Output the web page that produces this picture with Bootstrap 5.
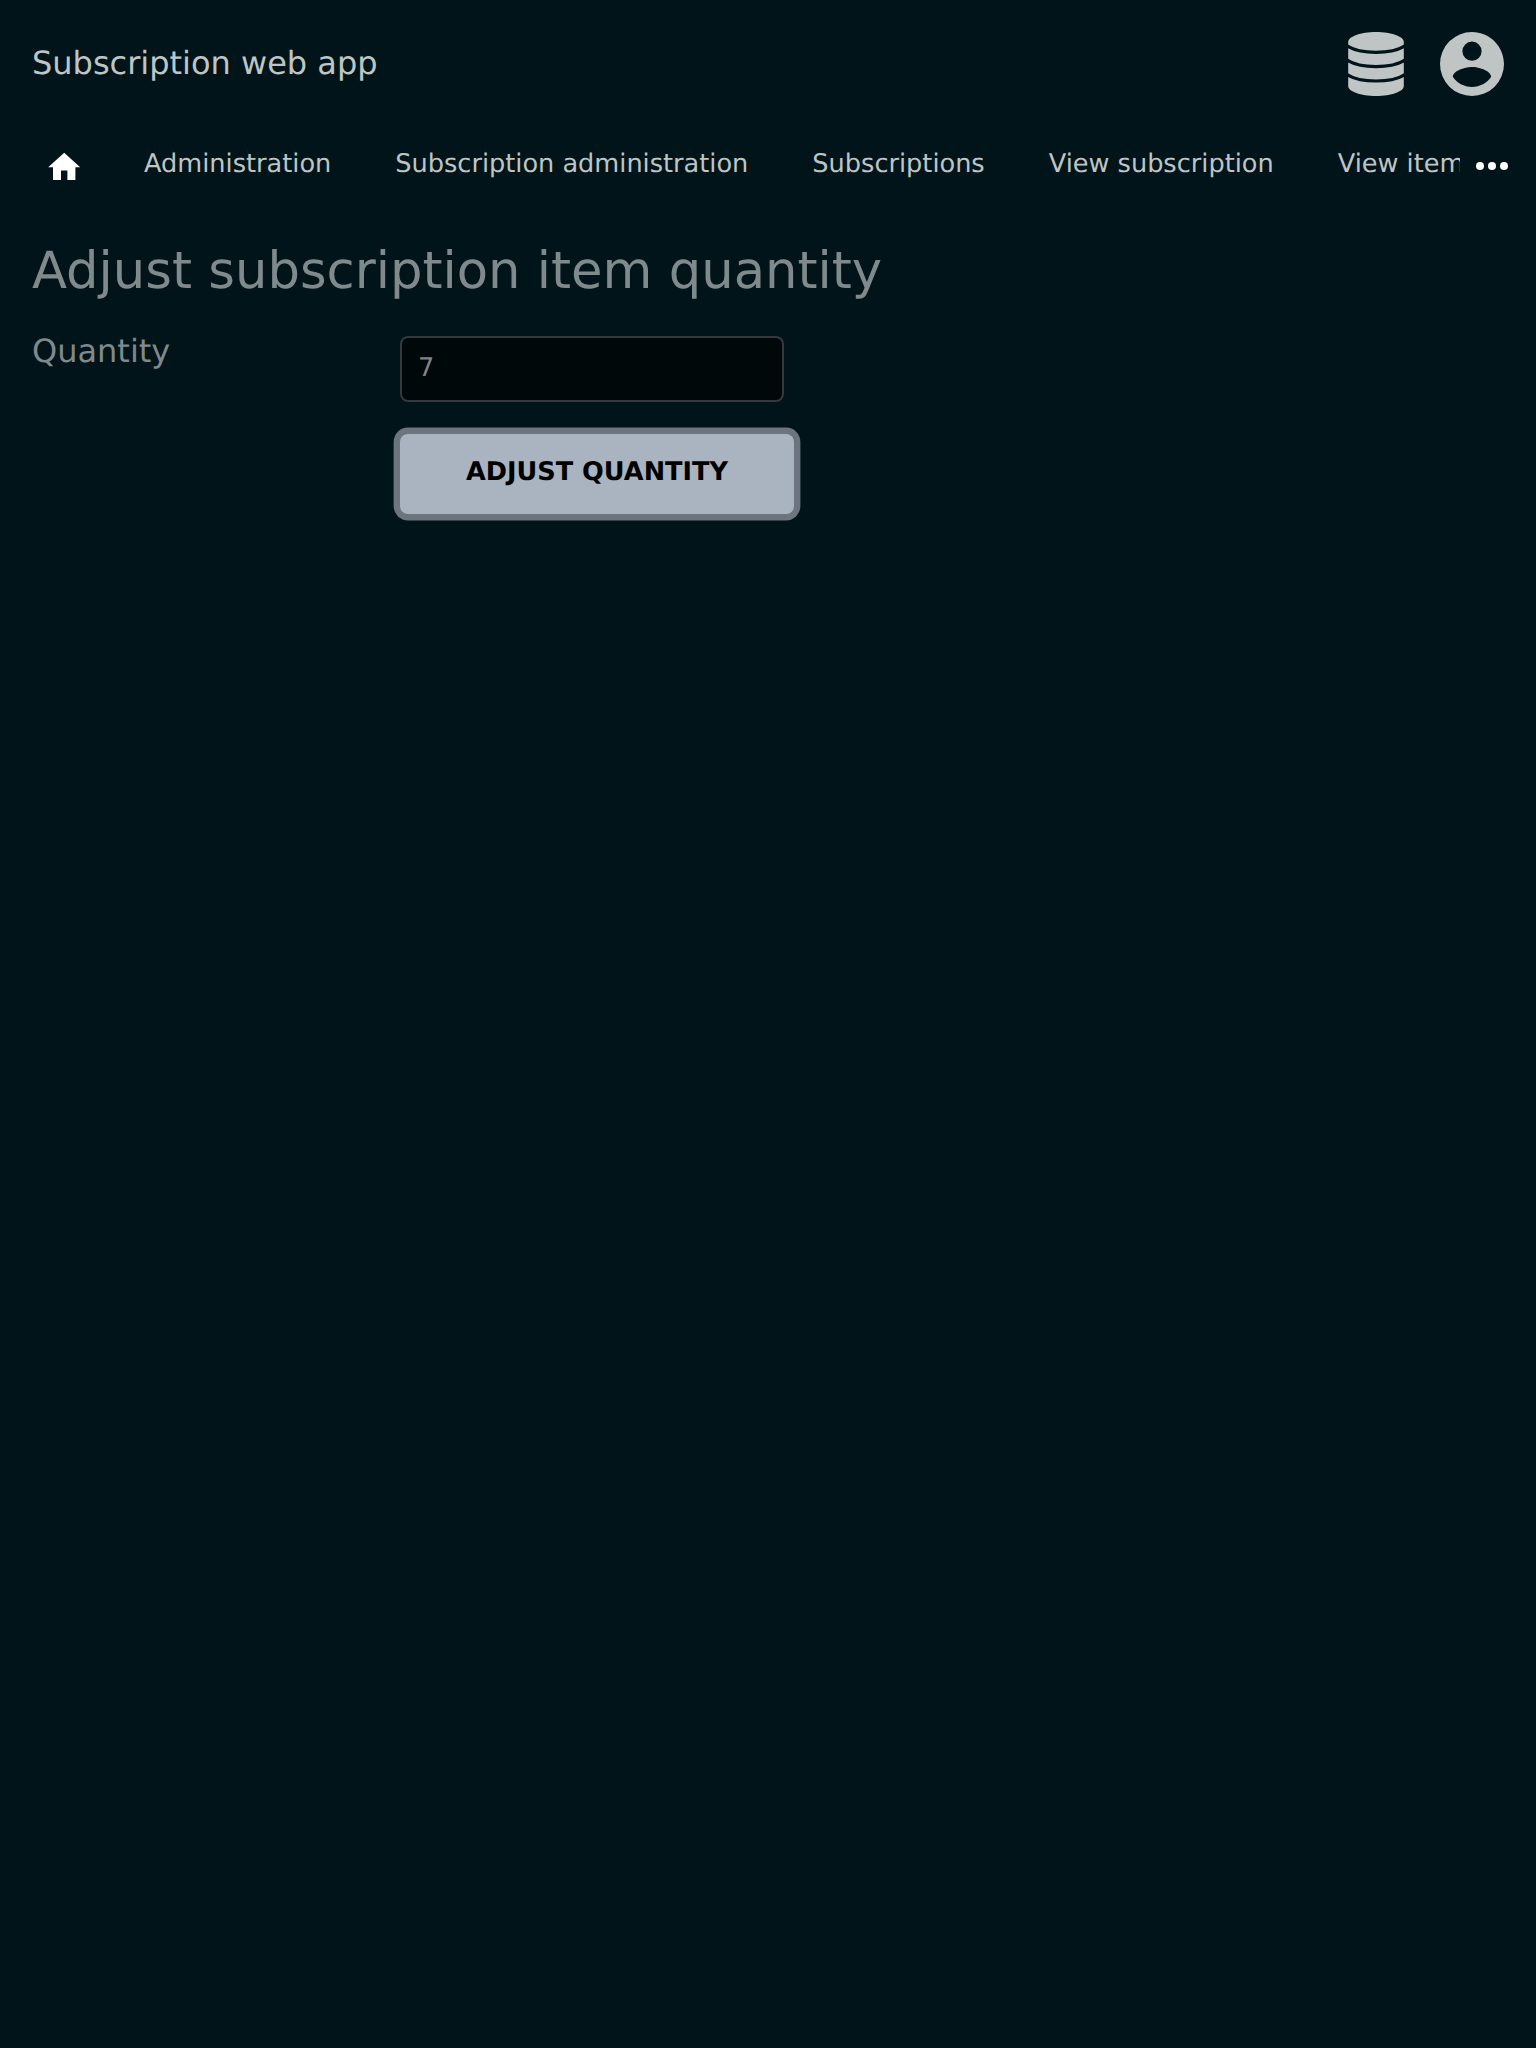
<!DOCTYPE html>
<html lang="en" data-bs-theme="dark">
<head>
<meta charset="utf-8">
<title>Subscription web app</title>
<link href="https://cdn.jsdelivr.net/npm/bootstrap@5.3.0/dist/css/bootstrap.min.css" rel="stylesheet">
<style>
body{background:#001419;font-family:"DejaVu Sans",sans-serif;font-size:32px;line-height:1.5;color:#80898c;min-height:100vh;text-rendering:geometricPrecision}
.topbar{height:128px;padding:0 32px;color:#bfc4c5}
.app-title{line-height:48px;margin-top:-2px}
.tools{gap:36px}
.tools svg,.crumbs svg{display:block;fill:currentColor}
.tools .disc-gaps{fill:none;stroke:#001419;stroke-width:3.2}
.crumbs{height:76px;padding-left:45px;font-size:25.6px}
.crumbs .nav-link{color:#bfc4c5;padding:0 0 5px;line-height:38px;white-space:nowrap}
.home-icon{margin-top:2px}
.crumb-list{gap:64px;width:1316px;margin-left:60.6px;height:70px}
.page-title{font-size:51.2px;line-height:76px;margin:29px 0 0;font-weight:400;color:#80898c}
.adjust-form{margin-top:18px}
.field-label{width:368px;line-height:48px}
.qty,.btn-adjust{text-rendering:inherit}
.qty{width:384px;height:66px;margin-top:9px;background:#00080a;border:2px solid #35393d;border-radius:8px;color:#808485;padding:0 16px 3px;font-size:25.6px}
.btn-adjust{width:394px;height:80px;margin:32px 0 0 0;background:#a9b4c0;border:0;border-radius:8px;box-shadow:0 0 0 6.4px #6c757d;color:#000;font-size:25.6px;font-weight:700;padding:0 0 4px}
</style>
</head>
<body>
<header class="topbar d-flex justify-content-between align-items-center">
  <span class="app-title">Subscription web app</span>
  <div class="tools d-flex">
    <svg width="56" height="64" viewBox="0 0 56 64"><path d="M.2 10C.2 4.500 12.500 0 28 0S55.800 4.500 55.800 10V54C55.800 59.500 43.500 64 28 64S.2 59.500.2 54z"/><path class="disc-gaps" d="M-1 13.800C6 18.500 16 20.400 28 20.400S50 18.500 57 13.800M-1 28C6 32.700 16 34.600 28 34.600S50 32.700 57 28M-1 42.400C6 47.100 16 49 28 49S50 47.100 57 42.400"/></svg>
    <svg width="64" height="64" viewBox="2 2 20 20"><path d="M12,19.2C9.5,19.2 7.29,17.92 6,16C6.03,14 10,12.9 12,12.9C14,12.9 17.97,14 18,16C16.710,17.92 14.5,19.2 12,19.2M12,5A3,3 0 0,1 15,8A3,3 0 0,1 12,11A3,3 0 0,1 9,8A3,3 0 0,1 12,5M12,2A10,10 0 0,0 2,12A10,10 0 0,0 12,22A10,10 0 0,0 22,12C22,6.470 17.5,2 12,2Z"/></svg>
  </div>
</header>
<nav class="crumbs d-flex align-items-center text-white">
  <svg class="home-icon flex-shrink-0" width="38.4" height="38.4" viewBox="0 0 24 24"><path d="M10,20V14H14V20H19V12H22L12,3L2,12H5V20H10Z"/></svg>
  <div class="crumb-list nav flex-nowrap flex-shrink-0 align-items-center overflow-hidden">
    <a class="nav-link" href="#">Administration</a>
    <a class="nav-link" href="#">Subscription administration</a>
    <a class="nav-link" href="#">Subscriptions</a>
    <a class="nav-link" href="#">View subscription</a>
    <a class="nav-link" href="#">View item</a>
  </div>
  <svg class="flex-shrink-0 ms-2" width="48" height="48" viewBox="0 0 24 24"><circle cx="6" cy="12" r="2"/><circle cx="12" cy="12" r="2"/><circle cx="18" cy="12" r="2"/></svg>
</nav>
<main class="px-4">
  <h1 class="page-title ms-2">Adjust subscription item quantity</h1>
  <form class="adjust-form d-flex ms-2">
    <label class="field-label" for="qty">Quantity</label>
    <div class="d-flex flex-column">
      <input class="form-control qty" id="qty" type="text" value="7">
      <button class="btn btn-adjust" type="button">ADJUST QUANTITY</button>
    </div>
  </form>
</main>
<script src="https://cdn.jsdelivr.net/npm/bootstrap@5.3.0/dist/js/bootstrap.bundle.min.js"></script>
</body>
</html>
